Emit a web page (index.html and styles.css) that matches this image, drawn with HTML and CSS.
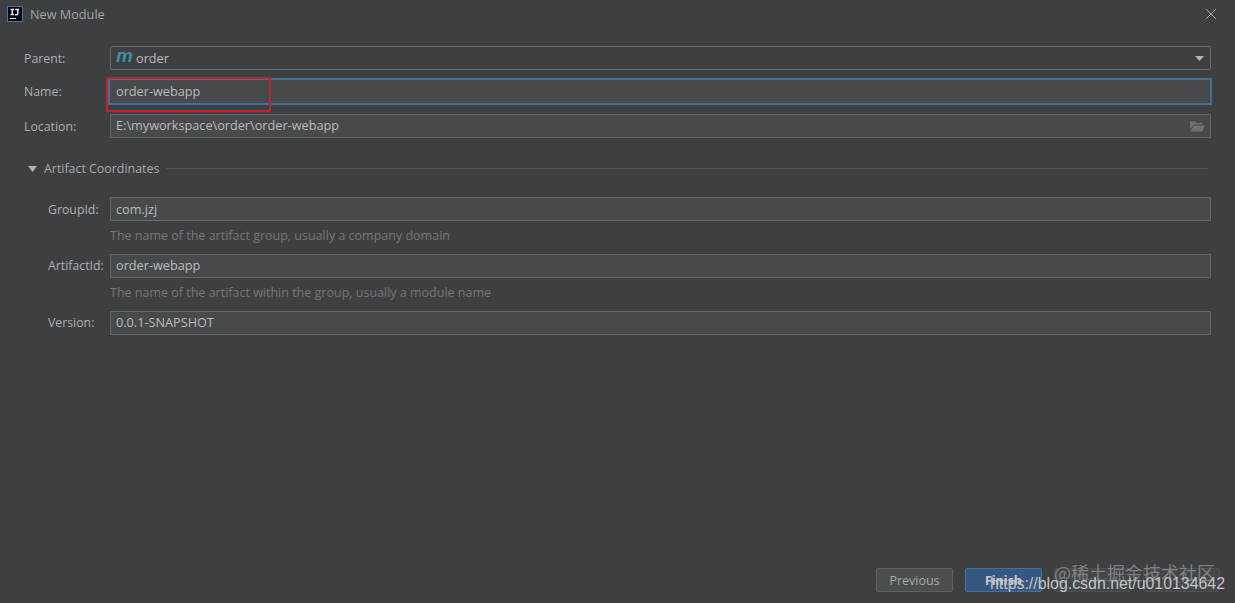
FILE: index.html
```html
<!DOCTYPE html>
<html lang="en">
<head>
<meta charset="utf-8">
<title>New Module</title>
<link rel="stylesheet" href="styles.css">
</head>
<body>
<div class="dialog">
  <header class="titlebar">
    <div class="title-left">
      <svg class="app-icon" width="16" height="16" viewBox="0 0 16 16">
        <rect x="0.5" y="0.5" width="15" height="15" fill="#07090e" stroke="#3c78b4"/>
        <path d="M3.500 3.500h3.500M5.250 3.500v5M3.500 8.500h3.500M8.200 3.500h4M10.800 3.500v4q0 1.300-1.300 1.300h-1.500" fill="none" stroke="#eeeeee" stroke-width="1.400"/>
        <rect x="3" y="12" width="6" height="1" fill="#eeeeee"/>
      </svg>
      <span class="title-text">New Module</span>
    </div>
    <svg class="close-icon" width="12" height="12" viewBox="0 0 12 12"><path d="M1 1l10 10M11 1L1 11" stroke="#a8a9aa" stroke-width="1" fill="none"/></svg>
  </header>

  <main class="form">
    <div class="row row-parent">
      <label class="label">Parent:</label>
      <div class="field field-round">
        <span class="maven-m">m</span><span class="value">order</span>
        <span class="spacer"></span>
        <svg class="arrow" width="9" height="5" viewBox="0 0 9 5"><path d="M0 0h9L4.500 5z" fill="#b4b5b5"/></svg>
      </div>
    </div>
    <div class="row row-name">
      <label class="label label-up">Name:</label>
      <div class="field field-focus"><span class="value">order-webapp</span></div>
    </div>
    <div class="row row-location">
      <label class="label">Location:</label>
      <div class="field field-tint">
        <span class="value value-up">E:\myworkspace\order\order-webapp</span>
        <span class="spacer"></span>
        <svg class="folder" width="15" height="12" viewBox="0 0 15 12"><path d="M0 1.500h5l1.500 1.500h6v1.500H3.500L0 10z" fill="#6e7274"/><path d="M3.800 5.500H15L12 11.500H0.500z" fill="#6e7274"/></svg>
      </div>
    </div>

    <div class="section">
      <svg class="caret" width="9" height="6" viewBox="0 0 9 6"><path d="M0 0h9L4.500 6z" fill="#b4b5b5"/></svg>
      <span class="section-title">Artifact Coordinates</span>
      <span class="section-line"></span>
    </div>

    <div class="row row-sub">
      <label class="label label-sub">GroupId:</label>
      <div class="field field-tint"><span class="value">com.jzj</span></div>
    </div>
    <p class="hint">The name of the artifact group, usually a company domain</p>
    <div class="row row-sub">
      <label class="label label-sub label-up">ArtifactId:</label>
      <div class="field field-tint"><span class="value value-up">order-webapp</span></div>
    </div>
    <p class="hint">The name of the artifact within the group, usually a module name</p>
    <div class="row row-sub">
      <label class="label label-sub label-up">Version:</label>
      <div class="field field-tint"><span class="value value-up">0.0.1-SNAPSHOT</span></div>
    </div>
  </main>

  <footer class="actions">
    <button class="btn">Previous</button>
    <button class="btn btn-primary">Finish</button>
    <button class="btn btn-ghost">Cancel</button>
    <button class="btn btn-ghost">Help</button>
  </footer>

  <div class="highlight"></div>
  <div class="wm-cn">@稀土掘金技术社区</div>
  <div class="wm-url">https://blog.csdn.net/u010134642</div>
</div>
</body>
</html>
```
FILE: styles.css
```css
* { box-sizing: border-box; }
html, body { margin: 0; height: 100%; }
body {
  background: #3d3f41;
  font-family: "Open Sans", "Noto Sans", sans-serif;
  font-size: 12px;
  color: #b4b6b7;
  overflow: hidden;
}
.dialog {
  position: relative;
  width: 1235px;
  height: 603px;
  display: flex;
  flex-direction: column;
}
.titlebar {
  height: 28px;
  flex: none;
  display: flex;
  align-items: center;
  justify-content: space-between;
  padding: 0 18px 0 7px;
}
.title-left { display: flex; align-items: center; gap: 7px; }
.app-icon { display: block; }
.title-text { color: #a4a6a7; font-size: 12.7px; }
.close-icon { display: block; }

.form {
  flex: 1;
  padding: 18px 24px 0 24px;
  display: flex;
  flex-direction: column;
}
.row { display: flex; align-items: center; height: 24px; }
.row-name { margin-top: 8px; height: 28px; align-items: flex-start; }
.row-location { margin-top: 8px; }
.row-sub { padding-left: 24px; }
.label { width: 86px; flex: none; color: #aeb0b1; font-size: 12.3px; }
.label-sub { width: 62px; }
.label-up { padding-bottom: 2px; }
.row-name .label { padding: 5px 0 0; }
.field {
  flex: 1;
  height: 24px;
  display: flex;
  align-items: center;
  padding: 0 5px;
  border: 1px solid #646667;
  background: #464a4a;
  color: #bbbcbd;
  font-size: 12.7px;
  min-width: 0;
}
.field-round { background: #3d3f41; border-radius: 2px; padding-right: 6px; border-color: #696b6c; }
.field-focus {
  height: 27px;
  margin-left: -2px;
  margin-right: -1px;
  padding-left: 6px;
  padding-bottom: 1px;
  border: 2.500px solid #456e96;
  background: #464a4a;
}
.field-tint { background: #464a4a; }
.maven-m {
  font-family: "Liberation Sans", sans-serif;
  font-weight: 700;
  font-style: italic;
  font-size: 19px;
  line-height: 16px;
  width: 15px;
  color: #3f8ea6;
  margin-right: 5px;
  margin-top: -5px;
}
.value { white-space: nowrap; }
.value-up { padding-bottom: 2px; }
.spacer { flex: 1; }
.arrow { display: block; }
.folder { display: block; }

.section {
  margin-top: 22px;
  height: 17px;
  display: flex;
  align-items: center;
  padding-left: 4px;
  margin-right: 3px;
}
.caret { display: block; margin-right: 7px; }
.section-title { color: #a8aaab; white-space: nowrap; font-size: 12.4px; }
.section-line { flex: 1; height: 1px; background: #515354; margin-left: 7px; }
.section + .row { margin-top: 20px; }

.hint {
  margin: 0;
  height: 33px;
  padding: 6px 0 0 86px;
  line-height: 18px;
  font-size: 12.5px;
  color: #76787a;
}

.actions {
  flex: none;
  height: 51px;
  display: flex;
  justify-content: flex-end;
  gap: 12px;
  padding: 16px 15px 11px 0;
}
.btn {
  width: 77px;
  height: 24px;
  border: 1px solid #5e6162;
  border-radius: 2px;
  background: #4a4e4f;
  color: #a8aaab;
  font: inherit;
  font-size: 12.5px;
  padding: 0;
}
.btn-primary {
  background: #365880;
  border-color: #456f9c;
  color: #c9cccd;
  font-weight: 700;
}
.btn-ghost { color: #55585a; background: #44474a; border-color: #4e5152; }

.highlight {
  position: absolute;
  left: 106px;
  top: 77px;
  width: 165px;
  height: 35px;
  border: 2px solid #c5202c;
  pointer-events: none;
}
.wm-cn {
  position: absolute;
  left: 1054px;
  top: 560px;
  font-size: 18px;
  line-height: 24px;
  color: rgba(170,172,173,0.6);
  font-family: "Noto Sans CJK SC", sans-serif;
  white-space: nowrap;
}
.wm-url {
  position: absolute;
  left: 990px;
  top: 574px;
  font-family: "Liberation Sans", sans-serif;
  font-size: 15.900px;
  line-height: 20px;
  color: #c4c5c6;
  white-space: nowrap;
}
```
